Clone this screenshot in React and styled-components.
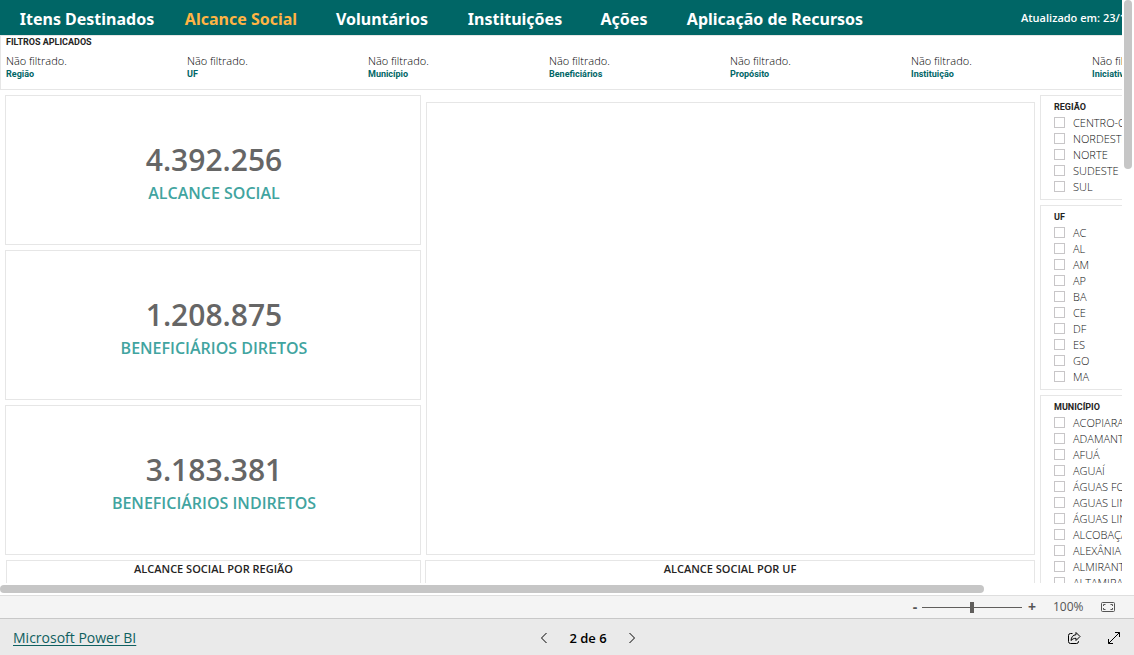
import React, { useState } from 'react'
import styled, { createGlobalStyle } from 'styled-components'

const GlobalStyle = createGlobalStyle`
    * {
        box-sizing: border-box;
    }
    body {
        margin: 0;
        background-color: white;
        font-family: "Open Sans", "Noto Sans", sans-serif;
        color: #252423;
    }
    button {
        font-family: inherit;
        border: none;
        background: none;
        padding: 0;
        cursor: pointer;
    }
`

const Page = styled.div`
    height: 100vh;
    display: flex;
    flex-direction: column;
`

const Stage = styled.div`
    flex: 1;
    min-height: 0;
    display: grid;
    grid-template-columns: minmax(0, 1fr) 12px;
    grid-template-rows: minmax(0, 1fr) 12px;
`

const Viewport = styled.main`
    overflow: hidden;
`

const Report = styled.div`
    min-width: 1280px;
`

const VerticalTrack = styled.div`
    padding: 0 2px;
`

const VerticalThumb = styled.div`
    height: 29%;
    border-radius: 4px;
    background-color: #c6c6c6;
`

const HorizontalTrack = styled.div`
    grid-column: 1 / 3;
    padding: 2px 0;
`

const HorizontalThumb = styled.div`
    width: 86.8%;
    height: 8px;
    border-radius: 4px;
    background-color: #c6c6c6;
`

const Header = styled.header`
    height: 35px;
    display: flex;
    align-items: center;
    background-color: #006666;
    color: white;
`

const Nav = styled.nav`
    display: grid;
    grid-template-columns: 174px 134px 148px 118px 100px 202px;
    width: 1021px;
`

const NavButton = styled.button`
    font-family: "Noto Sans", sans-serif;
    font-size: 16px;
    font-weight: 700;
    line-height: 24px;
    white-space: nowrap;
    padding-top: 3px;
    color: ${(props) => (props.$active ? '#ffb444' : 'white')};
`

const Updated = styled.span`
    font-size: 11px;
    font-weight: 600;
    white-space: nowrap;
`

const Filters = styled.section`
    height: 55px;
    border: 1px solid #e6e6e6;
    padding-left: 5px;
`

const SmallTitle = styled.h2`
    margin: 0;
    font-family: Roboto, sans-serif;
    font-size: 9px;
    font-weight: 700;
    line-height: ${(props) => props.$line || 12}px;
`

const FilterList = styled.dl`
    margin: 6px 0 0;
    display: grid;
    grid-template-columns: repeat(7, 181px);
`

const Filter = styled.div`
    display: flex;
    flex-direction: column-reverse;
`

const FilterName = styled.dt`
    font-family: Roboto, sans-serif;
    font-size: 9px;
    font-weight: 700;
    line-height: 12px;
    color: #006666;
`

const FilterValue = styled.dd`
    margin: 0;
    font-size: 11px;
    font-weight: 300;
    line-height: 14px;
    color: black;
`

const Body = styled.div`
    display: grid;
    grid-template-columns: 1030px 1fr;
    gap: 5px;
    padding: 5px;
`

const Main = styled.div`
    display: flex;
    flex-direction: column;
    gap: 5px;
`

const Overview = styled.div`
    display: grid;
    grid-template-columns: 416px 1fr;
    gap: 5px;
`

const Cards = styled.div`
    display: flex;
    flex-direction: column;
    gap: 5px;
`

const Box = styled.section`
    border: 1px solid #e6e6e6;
    background-color: white;
`

const Card = styled(Box)`
    height: 150px;
    padding: 46px 0 0 2px;
    text-align: center;
`

const CardValue = styled.div`
    font-size: 30px;
    font-weight: 600;
    line-height: 36px;
    color: #666666;
`

const CardLabel = styled.div`
    font-size: 16px;
    font-weight: 600;
    line-height: 30px;
    color: #41a4a0;
`

const MapBox = styled(Box)`
    margin-top: 7px;
`

const Charts = styled.div`
    display: grid;
    grid-template-columns: 415px 1fr;
    gap: 4px;
    padding-left: 1px;
`

const ChartBox = styled(Box)`
    height: 300px;
`

const ChartTitle = styled.h2`
    margin: 0;
    font-size: 11px;
    font-weight: 600;
    line-height: 16px;
    text-align: center;
`

const Slicers = styled.aside`
    display: flex;
    flex-direction: column;
    gap: 5px;
`

const Slicer = styled(Box)`
    padding: 4px 0 5px 13px;
`

const Option = styled.label`
    display: flex;
    align-items: center;
    gap: 8px;
    height: 16px;
    font-size: 11px;
    font-weight: 300;
    white-space: nowrap;
    color: #111111;
`

const Tick = styled.input`
    appearance: none;
    width: 11px;
    height: 11px;
    margin: 0;
    border: 1px solid #c8c6c8;
    background-color: white;

    &:checked {
        background-color: #666666;
    }
`

const ZoomBar = styled.div`
    height: 23px;
    display: flex;
    align-items: center;
    justify-content: flex-end;
    border-top: 1px solid #dedede;
    background-color: #f4f4f4;
    padding-right: 19px;
    color: #555555;
`

const Step = styled.button`
    width: 20px;
    font-size: 14px;
    font-weight: 700;
    line-height: 20px;
    color: #555555;
`

const Slider = styled.input`
    appearance: none;
    width: 100px;
    height: 11px;
    margin: 0 0 0 -3px;
    background: linear-gradient(#605e5c, #605e5c) center / 100% 1px no-repeat;

    &::-webkit-slider-thumb {
        appearance: none;
        width: 4px;
        height: 11px;
        background-color: #605e5c;
    }
`

const Percent = styled.span`
    width: 48px;
    margin-left: 11px;
    font-size: 12px;
    line-height: 20px;
`

const Icon = styled.svg`
    display: block;
    fill: none;
    stroke: currentColor;
`

const FitButton = styled.button`
    color: #555555;
`

const Footer = styled.footer`
    height: 37px;
    display: grid;
    grid-template-columns: 1fr auto 1fr;
    align-items: center;
    border-top: 1px solid #c8c8c8;
    background-color: #eaeaea;
    padding: 2px 13px 0;
`

const BrandLink = styled.a`
    justify-self: start;
    font-size: 14px;
    line-height: 20px;
    text-underline-offset: 2px;
    color: #0f6060;
`

const Pager = styled.div`
    display: flex;
    align-items: center;
    gap: 21px;
    padding-left: 42px;
    color: #252423;
`

const PageLabel = styled.span`
    font-size: 13px;
    font-weight: 600;
    line-height: 20px;
    color: black;
`

const Actions = styled.div`
    justify-self: end;
    display: flex;
    gap: 26px;
`

const pages = ['Itens Destinados', 'Alcance Social', 'Voluntários', 'Instituições', 'Ações', 'Aplicação de Recursos']

const filters = ['Região', 'UF', 'Município', 'Beneficiários', 'Propósito', 'Instituição', 'Iniciativa']

const cards = [
    { value: '4.392.256', label: 'ALCANCE SOCIAL' },
    { value: '1.208.875', label: 'BENEFICIÁRIOS DIRETOS' },
    { value: '3.183.381', label: 'BENEFICIÁRIOS INDIRETOS' },
]

const slicers = [
    { title: 'REGIÃO', options: ['CENTRO-OESTE', 'NORDESTE', 'NORTE', 'SUDESTE', 'SUL'] },
    { title: 'UF', options: ['AC', 'AL', 'AM', 'AP', 'BA', 'CE', 'DF', 'ES', 'GO', 'MA'] },
    {
        title: 'MUNICÍPIO',
        options: [
            'ACOPIARA', 'ADAMANTINA', 'AFUÁ', 'AGUAÍ', 'ÁGUAS FORMOSAS', 'AGUAS LINDAS DE GOIAS',
            'ÁGUAS LINDAS DE GOIÁS', 'ALCOBAÇA', 'ALEXÂNIA', 'ALMIRANTE TAMANDARÉ', 'ALTAMIRA',
        ],
    },
]

const App = () => {
    const [page, setPage] = useState(1)
    const [zoom, setZoom] = useState(100)

  return (
    <Page>
        <GlobalStyle />
        <Stage>
            <Viewport>
                <Report>
                    <Header>
                        <Nav>
                            {pages.map((name, i) => (
                                <NavButton key={name} $active={i === page} onClick={() => setPage(i)}>{name}</NavButton>
                            ))}
                        </Nav>
                        <Updated>Atualizado em: 23/10/2023</Updated>
                    </Header>
                    <Filters>
                        <SmallTitle>FILTROS APLICADOS</SmallTitle>
                        <FilterList>
                            {filters.map((name) => (
                                <Filter key={name}>
                                    <FilterName>{name}</FilterName>
                                    <FilterValue>Não filtrado.</FilterValue>
                                </Filter>
                            ))}
                        </FilterList>
                    </Filters>
                    <Body>
                        <Main>
                            <Overview>
                                <Cards>
                                    {cards.map((card) => (
                                        <Card key={card.label}>
                                            <CardValue>{card.value}</CardValue>
                                            <CardLabel>{card.label}</CardLabel>
                                        </Card>
                                    ))}
                                </Cards>
                                <MapBox />
                            </Overview>
                            <Charts>
                                <ChartBox><ChartTitle>ALCANCE SOCIAL POR REGIÃO</ChartTitle></ChartBox>
                                <ChartBox><ChartTitle>ALCANCE SOCIAL POR UF</ChartTitle></ChartBox>
                            </Charts>
                        </Main>
                        <Slicers>
                            {slicers.map((slicer) => (
                                <Slicer key={slicer.title}>
                                    <SmallTitle $line={14}>{slicer.title}</SmallTitle>
                                    {slicer.options.map((option) => (
                                        <Option key={option}>
                                            <Tick type="checkbox" />
                                            {option}
                                        </Option>
                                    ))}
                                </Slicer>
                            ))}
                        </Slicers>
                    </Body>
                </Report>
            </Viewport>
            <VerticalTrack><VerticalThumb /></VerticalTrack>
            <HorizontalTrack><HorizontalThumb /></HorizontalTrack>
        </Stage>
        <ZoomBar>
            <Step aria-label="Reduzir" onClick={() => setZoom(zoom - 10)}>-</Step>
            <Slider type="range" min="0" max="200" aria-label="Zoom" value={zoom} onChange={(e) => setZoom(Number(e.target.value))} />
            <Step aria-label="Ampliar" onClick={() => setZoom(zoom + 10)}>+</Step>
            <Percent>{zoom}%</Percent>
            <FitButton aria-label="Ajustar à página">
                <Icon width="14" height="10" viewBox="0 0 14 10">
                    <rect x="0.5" y="0.5" width="13" height="9" rx="1" />
                    <path d="M4.5 2.5h-2v1.5M2.5 6v1.5h2M9.5 2.5h2v1.5M11.5 6v1.5h-2" />
                </Icon>
            </FitButton>
        </ZoomBar>
        <Footer>
            <BrandLink href="#">Microsoft Power BI</BrandLink>
            <Pager>
                <button aria-label="Página anterior" onClick={() => setPage(Math.max(0, page - 1))}>
                    <Icon width="8" height="12" viewBox="0 0 8 12"><path d="M6.5 1L1.5 6l5 5" /></Icon>
                </button>
                <PageLabel>{page + 1} de 6</PageLabel>
                <button aria-label="Próxima página" onClick={() => setPage(Math.min(5, page + 1))}>
                    <Icon width="8" height="12" viewBox="0 0 8 12"><path d="M1.5 1l5 5-5 5" /></Icon>
                </button>
            </Pager>
            <Actions>
                <button aria-label="Compartilhar">
                    <Icon width="14" height="14" viewBox="0 0 14 14">
                        <path d="M5.5 2.5h-2a2 2 0 0 0-2 2v6a2 2 0 0 0 2 2h6a2 2 0 0 0 2-2V10" />
                        <path d="M9 1.5l4 4-4 4V7.3C6.8 7.3 5.5 8 4 9.5 4.3 6 6 4 9 3.7z" strokeLinejoin="round" />
                    </Icon>
                </button>
                <button aria-label="Tela inteira">
                    <Icon width="14" height="14" viewBox="0 0 14 14">
                        <path d="M1.5 12.5l11-11M8 1.5h4.500V6M1.5 8v4.500H6" />
                    </Icon>
                </button>
            </Actions>
        </Footer>
    </Page>
  )
}

export default App
